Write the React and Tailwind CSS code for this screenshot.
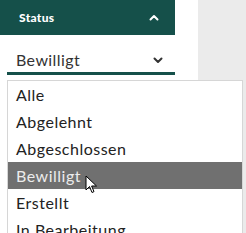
import React from "react";

const options = [
  "Alle",
  "Abgelehnt",
  "Abgeschlossen",
  "Bewilligt",
  "Erstellt",
  "In Bearbeitung",
];

const Chevron = ({ up, className }) => (
  <svg width="10" height="7" viewBox="0 0 10 7" className={className}>
    <path
      d={up ? "M1.5 5.5 L5 2 L8.5 5.5" : "M1.5 1.5 L5 5 L8.5 1.5"}
      fill="none"
      stroke="currentColor"
      strokeWidth="2"
      strokeLinecap="round"
      strokeLinejoin="round"
    />
  </svg>
);

const Cursor = () => (
  <svg width="13" height="19" viewBox="0 0 13 19" className="absolute left-[85px] top-[175px]">
    <path
      d="M1 1 L1 15 L4.5 11.5 L7 17.5 L9 16.6 L6.6 11 L11.5 11 Z"
      fill="#fff"
      stroke="#000"
      strokeWidth="1"
      strokeLinejoin="round"
    />
  </svg>
);

export default function App() {
  return (
    <div
      className="relative w-[246px] h-[233px] overflow-hidden bg-white flex"
      style={{ fontFamily: "Lato, 'Open Sans', sans-serif" }}
    >
      <div className="w-[175px] flex flex-col">
        <div className="h-[35px] bg-[#15504a] flex items-center justify-between pl-[19px] pr-[16px] text-white">
          <span className="text-[12px] font-black tracking-[0.3px]">Status</span>
          <Chevron up />
        </div>
        <div className="ml-[7px] h-[40px] pt-[13px] flex items-center justify-between pl-[9px] pr-[12px] border-b-[3px] border-[#15504a] text-[#333]">
          <span className="text-[16px] tracking-[0.4px]">Bewilligt</span>
          <Chevron className="text-[#333]" />
        </div>
      </div>
      <div className="w-[23px]" />
      <div className="flex-1 bg-[#ebebeb]" />

      <div className="absolute left-[7px] top-[80px] w-[236px] h-[170px] bg-white border border-[#d6d6d6]">
        {options.map((o) => (
          <div
            key={o}
            className={
              o === "Bewilligt"
                ? "h-[27px] flex items-center pl-[8px] text-[16px] tracking-[0.5px] bg-[#707070] text-[#ececec]"
                : "h-[27px] flex items-center pl-[8px] text-[16px] tracking-[0.5px] text-[#222]"
            }
          >
            {o}
          </div>
        ))}
      </div>
      <Cursor />
    </div>
  );
}
